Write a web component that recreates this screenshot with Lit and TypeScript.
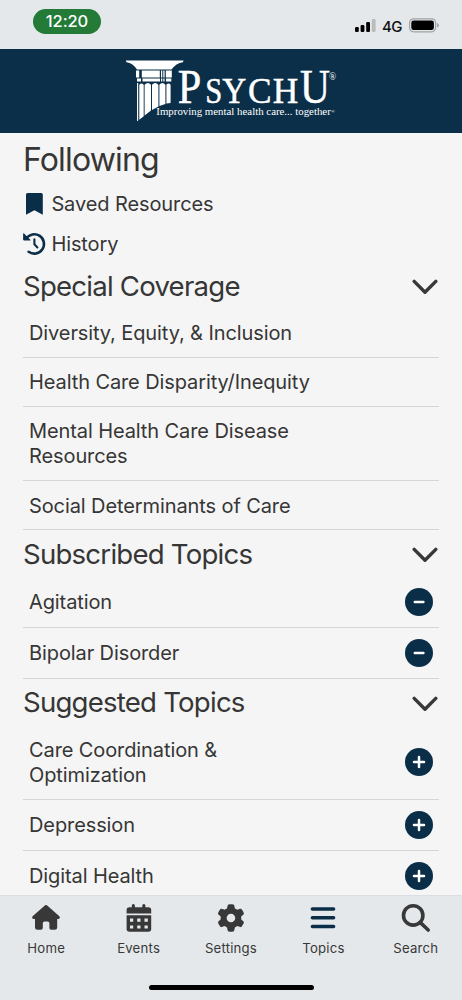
import { LitElement, html, css, svg } from "lit";
import { customElement } from "lit/decorators.js";

const icons: Record<string, unknown> = {
  home: svg`<path d="M14.1 1.3 Q15 .5 15.9 1.3 L28.4 12.2 Q29.6 14.2 27.6 14.9 L26.2 14.9 V23.4 Q26.2 25.8 23.9 25.8 H20.2 Q18.4 25.8 18.4 24 V19.2 Q18.4 17.4 16.6 17.4 H13.6 Q11.8 17.4 11.8 19.2 V24 Q11.8 25.8 10 25.8 H6.3 Q4 25.8 4 23.4 V14.9 L2.4 14.9 Q.4 14.2 1.6 12.2 Z"/>`,
  events: svg`<path fill-rule="evenodd" d="M2.6 9.5 V6 Q2.6 3.2 5.4 3.2 H7.8 V1.5 a1.55 1.55 0 0 1 3.1 0 V3.2 H18.3 V1.5 a1.55 1.55 0 0 1 3.1 0 V3.2 H24.4 Q27.2 3.2 27.2 6 V9.5 Z M2.6 11.2 H27.2 V25 Q27.2 27.8 24.4 27.8 H5.4 Q2.6 27.8 2.6 25 Z M6 14.6 V17.8 H9.2 V14.6 Z M13.2 14.6 V17.8 H16.5 V14.6 Z M20.5 14.6 V17.8 H23.8 V14.6 Z M6 21.4 V24.5 H9.2 V21.4 Z M13.2 21.4 V24.5 H16.5 V21.4 Z M20.5 21.4 V24.5 H23.8 V21.4 Z"/>`,
  settings: svg`<g transform="translate(1.2 .2) scale(.0537)"><path d="M495.9 166.6c3.2 8.7 .5 18.4-6.4 24.6l-43.3 39.4c1.1 8.3 1.7 16.8 1.7 25.4s-.6 17.1-1.7 25.4l43.3 39.4c6.9 6.2 9.6 15.9 6.4 24.6c-4.4 11.9-9.7 23.3-15.8 34.3l-4.7 8.1c-6.6 11-14 21.4-22.1 31.2c-5.9 7.2-15.7 9.6-24.5 6.8l-55.7-17.7c-13.4 10.3-28.2 18.9-44 25.4l-12.5 57.1c-2 9.1-9 16.3-18.2 17.8c-13.8 2.3-28 3.5-42.5 3.5s-28.7-1.2-42.5-3.5c-9.2-1.5-16.2-8.7-18.2-17.8l-12.5-57.1c-15.8-6.5-30.6-15.1-44-25.4L83.1 425.9c-8.8 2.8-18.6 .3-24.5-6.8c-8.1-9.8-15.5-20.2-22.1-31.2l-4.7-8.1c-6.1-11-11.4-22.4-15.8-34.3c-3.2-8.7-.5-18.4 6.4-24.6l43.3-39.4C64.6 273.1 64 264.6 64 256s.6-17.1 1.7-25.4L22.4 191.2c-6.9-6.2-9.6-15.9-6.4-24.6c4.4-11.9 9.7-23.3 15.8-34.3l4.7-8.1c6.6-11 14-21.4 22.1-31.2c5.9-7.2 15.7-9.6 24.5-6.8l55.7 17.7c13.4-10.3 28.2-18.9 44-25.4l12.5-57.1c2-9.1 9-16.3 18.2-17.8C227.3 1.2 241.5 0 256 0s28.7 1.2 42.5 3.5c9.2 1.5 16.2 8.7 18.2 17.8l12.5 57.1c15.8 6.5 30.6 15.1 44 25.4l55.7-17.7c8.8-2.8 18.6-.3 24.5 6.8c8.1 9.8 15.5 20.2 22.1 31.2l4.7 8.1c6.1 11 11.4 22.4 15.8 34.3zM256 336a80 80 0 1 0 0-160 80 80 0 1 0 0 160z"/></g>`,
  topics: svg`<path d="M4.4 5 H25.6 M4.4 13.7 H25.6 M4.4 22.4 H25.6" fill="none" stroke="currentColor" stroke-width="3.5" stroke-linecap="round"/>`,
  search: svg`<g fill="none" stroke="currentColor" stroke-width="3.6" stroke-linecap="round"><circle cx="12.2" cy="11.4" r="9.7"/><path d="M19.4 18.6 L27.2 26"/></g>`,
};

@customElement("nav-tab")
class NavTab extends LitElement {
  static properties = { icon: {}, label: {}, active: { type: Boolean, reflect: true } };
  declare icon: string;
  declare label: string;
  static styles = css`
    :host { display: flex; flex-direction: column; align-items: center; width: 92.4px; color: #383838; }
    :host([active]) svg { color: #0b2e48; }
    svg { width: 30px; height: 30px; fill: currentColor; overflow: visible; }
    .label { font-size: 13.2px; line-height: 16px; margin-top: 6px; letter-spacing: .2px; }
  `;
  render() {
    return html`<svg viewBox="0 0 30 30">${icons[this.icon]}</svg><span class="label">${this.label}</span>`;
  }
}

@customElement("topic-section")
class TopicSection extends LitElement {
  static properties = { heading: {}, items: { attribute: false }, action: {} };
  declare heading: string;
  declare items: string[];
  declare action: string;
  static styles = css`
    :host { display: block; }
    .head { display: flex; align-items: center; justify-content: space-between; height: 46px; padding-right: 1px; }
    h2 { margin: .6px 0 0; font-size: 27.6px; font-weight: 400; line-height: 34px; letter-spacing: -.78px; }
    .chevron { width: 26px; height: 16px; margin-top: 3px; }
    .row { display: flex; align-items: center; justify-content: space-between; box-sizing: border-box;
      padding: 12.4px 6px 10.6px 6px; border-bottom: 1px solid #d4d5d6; min-height: 49.1px; }
    .row.act { min-height: 51.4px; }
    .name { max-width: 300px; font-size: 20px; line-height: 25.2px; letter-spacing: -.1px; }
    .act .name { max-width: 230px; }
    .btn { width: 28px; height: 28px; flex: none; margin: -6px 0 -4.4px; }
  `;
  render() {
    const act = !!this.action;
    return html`
      <div class="head">
        <h2>${this.heading}</h2>
        <svg class="chevron" viewBox="0 0 26 16"><path d="M2.2 2.4 L13 13.2 L23.8 2.4" fill="none" stroke="#383838" stroke-width="3.4" stroke-linecap="round" stroke-linejoin="round"/></svg>
      </div>
      ${this.items.map(
        (t) => html`<div class="row ${act ? "act" : ""}">
          <span class="name">${t}</span>
          ${act
            ? html`<svg class="btn" viewBox="0 0 28 28"><circle cx="14" cy="14" r="14" fill="#0b2e48"/><path d=${this.action === "add" ? "M9 14 H19 M14 9 V19" : "M9.8 14 H18.4"} stroke="#fff" stroke-width="2.5" stroke-linecap="round"/></svg>`
            : ""}
        </div>`
      )}`;
  }
}

@customElement("app-root")
class AppRoot extends LitElement {
  static styles = css`
    :host { display: flex; flex-direction: column; width: 462px; height: 1000px; overflow: hidden;
      background: #f5f5f5; color: #363636; font-family: Inter, "Liberation Sans", sans-serif; }
    .status { flex: none; box-sizing: border-box; height: 49.4px; background: #e5e8eb; display: flex; justify-content: space-between; padding: 9px 23px 0 33px; }
    .time { box-sizing: border-box; width: 68px; height: 25px; border-radius: 13px; background: #237b37; color: #fff; text-align: center;
      font-size: 16.5px; font-weight: 500; line-height: 25px; letter-spacing: -.1px; }
    .signals { display: flex; align-items: flex-start; padding-top: 9px; color: #111; }
    .bars { width: 21px; height: 15px; }
    .net { font-size: 15px; font-weight: 500; line-height: 17px; margin: 0 7px 0 6px; letter-spacing: -.5px; }
    .batt { width: 30px; height: 15px; }
    .brand { flex: none; height: 83.6px; background: #0c2f49; }
    .brand svg { display: block; }
    main { flex: 1; min-height: 0; overflow: hidden; padding: 0 23px 0 23px; }
    h1 { margin: 0; padding-top: 7px; font-size: 32px; font-weight: 400; line-height: 40px; letter-spacing: -.85px; }
    .link { display: flex; align-items: center; gap: 5.4px; height: 39.2px; font-size: 20px; letter-spacing: -.1px; }
    .links { margin: 4.9px 0 -.85px; }
    .link svg { width: 23px; height: 24px; flex: none; }
    .tabs { flex: none; box-sizing: border-box; height: 105.5px; background: #e5e8eb; border-top: 1px solid #dcdfe1; display: flex; flex-direction: column; align-items: center; padding-top: 8.5px; }
    .tabrow { display: flex; height: 80.8px; }
    .indicator { width: 165px; height: 5.6px; border-radius: 3px; background: #000; }
  `;
  render() {
    return html`
      <div class="status">
        <div class="time">12:20</div>
        <div class="signals">
          <svg class="bars" viewBox="0 0 21 15">
            <rect x="0" y="9" width="3.8" height="5" rx="1.2"/><rect x="5.6" y="7" width="3.8" height="7" rx="1.2"/>
            <rect x="11.2" y="4" width="3.8" height="10" rx="1.2"/><rect x="16.8" y="1" width="3.8" height="13" rx="1.2" fill="#b9bbbd"/>
          </svg>
          <span class="net">4G</span>
          <svg class="batt" viewBox="0 0 30 15">
            <rect x=".6" y=".8" width="26" height="13" rx="4" fill="none" stroke="#a0a2a4" stroke-width="1.2"/>
            <rect x="2.3" y="2.5" width="22.6" height="9.6" rx="2.4"/>
            <path d="M28 5 Q29.8 5.5 29.8 7.3 Q29.8 9.1 28 9.6 Z" fill="#a0a2a4"/>
          </svg>
        </div>
      </div>
      <div class="brand">
        <svg width="462" height="83" viewBox="0 49.2 462 83" fill="#fff" font-family="Liberation Serif, serif">
          <path d="M125.7 60.8 H183.6 L182.9 62.4 Q176 63.5 171.5 69.7 H137 Q133 63.5 126.6 62.4 Z"/>
          <path d="M136 70.8 h3.2 v6.8 h-3.2z M141.8 70.8 h18 v6.8 h-18z M161 70.8h1.3v6.8h-1.3z M163.3 70.8h1.3v6.8h-1.3z M165.8 70.8h6v6.8h-6z M137 78.8h4v3h-4z M142.5 78.8h17.5v3h-17.5z M161 78.8h1.3v3h-1.3z M163.3 78.8h1.3v3h-1.3z M166 78.8h5.3v3h-5.3z"/>
          <path d="M137 83.2h1.2v37.4l-1.2 .8z M139.3 85q2.2-2.8 4.4 0v31.4l-4.4 3.6z M144.6 85q3.2-3.6 6.4 0v25.8l-6.4 4.8z M152 85q3.2-3.6 6.4 0v21.6l-6.4 3.6z M159.4 85q3-3.6 6 0v19.2l-6 2z M166.4 85q2.1-2.8 4.2 0v18.2l-4.2 .5z"/>
          <text y="103.3" font-size="36" stroke="#fff" stroke-width=".5"><tspan font-size="49" x="177.8" textLength="23.5" lengthAdjust="spacingAndGlyphs">P</tspan><tspan x="205.3" textLength="17" lengthAdjust="spacingAndGlyphs">S</tspan><tspan x="222.3" textLength="24" lengthAdjust="spacingAndGlyphs">Y</tspan><tspan x="248" textLength="23.5" lengthAdjust="spacingAndGlyphs">C</tspan><tspan x="272.7" textLength="25.5" lengthAdjust="spacingAndGlyphs">H</tspan><tspan font-size="49" x="300" textLength="30" lengthAdjust="spacingAndGlyphs">U</tspan><tspan x="329" y="80.3" font-size="9.5" stroke="none">®</tspan></text>
          <text x="156.3" y="115.4" font-size="11"><tspan textLength="174.5" lengthAdjust="spacingAndGlyphs">Improving mental health care... together</tspan><tspan x="331" y="113.4" font-size="5">®</tspan></text>
        </svg>
      </div>
      <main>
        <h1>Following</h1>
        <div class="links">
          <div class="link">
            <svg viewBox="0 0 23 24" fill="#0b2e48"><path d="M3 2.6 Q3 1 4.6 1 H18.2 Q19.8 1 19.8 2.6 V22.8 L11.4 18.2 L3 22.8 Z"/></svg>Saved Resources
          </div>
          <div class="link">
            <svg viewBox="0 0 23 24" fill="none" stroke="#0b2e48" stroke-width="2.6" stroke-linecap="round" stroke-linejoin="round"><path d="M3.2 6.6 A9.7 9.7 0 1 1 5.6 19.8"/><path d="M.7 2 L.7 8 L6.8 8 Z" fill="#0b2e48" stroke-width="1"/><path d="M11.4 7.2 V12.3 L14.4 15.4" stroke-width="2.1"/></svg>History
          </div>
        </div>
        <topic-section heading="Special Coverage" .items=${["Diversity, Equity, & Inclusion", "Health Care Disparity/Inequity", "Mental Health Care Disease Resources", "Social Determinants of Care"]}></topic-section>
        <topic-section heading="Subscribed Topics" action="remove" .items=${["Agitation", "Bipolar Disorder"]}></topic-section>
        <topic-section heading="Suggested Topics" action="add" .items=${["Care Coordination & Optimization", "Depression", "Digital Health"]}></topic-section>
      </main>
      <div class="tabs">
        <div class="tabrow">
          <nav-tab icon="home" label="Home"></nav-tab>
          <nav-tab icon="events" label="Events"></nav-tab>
          <nav-tab icon="settings" label="Settings"></nav-tab>
          <nav-tab icon="topics" label="Topics" active></nav-tab>
          <nav-tab icon="search" label="Search"></nav-tab>
        </div>
        <div class="indicator"></div>
      </div>`;
  }
}
